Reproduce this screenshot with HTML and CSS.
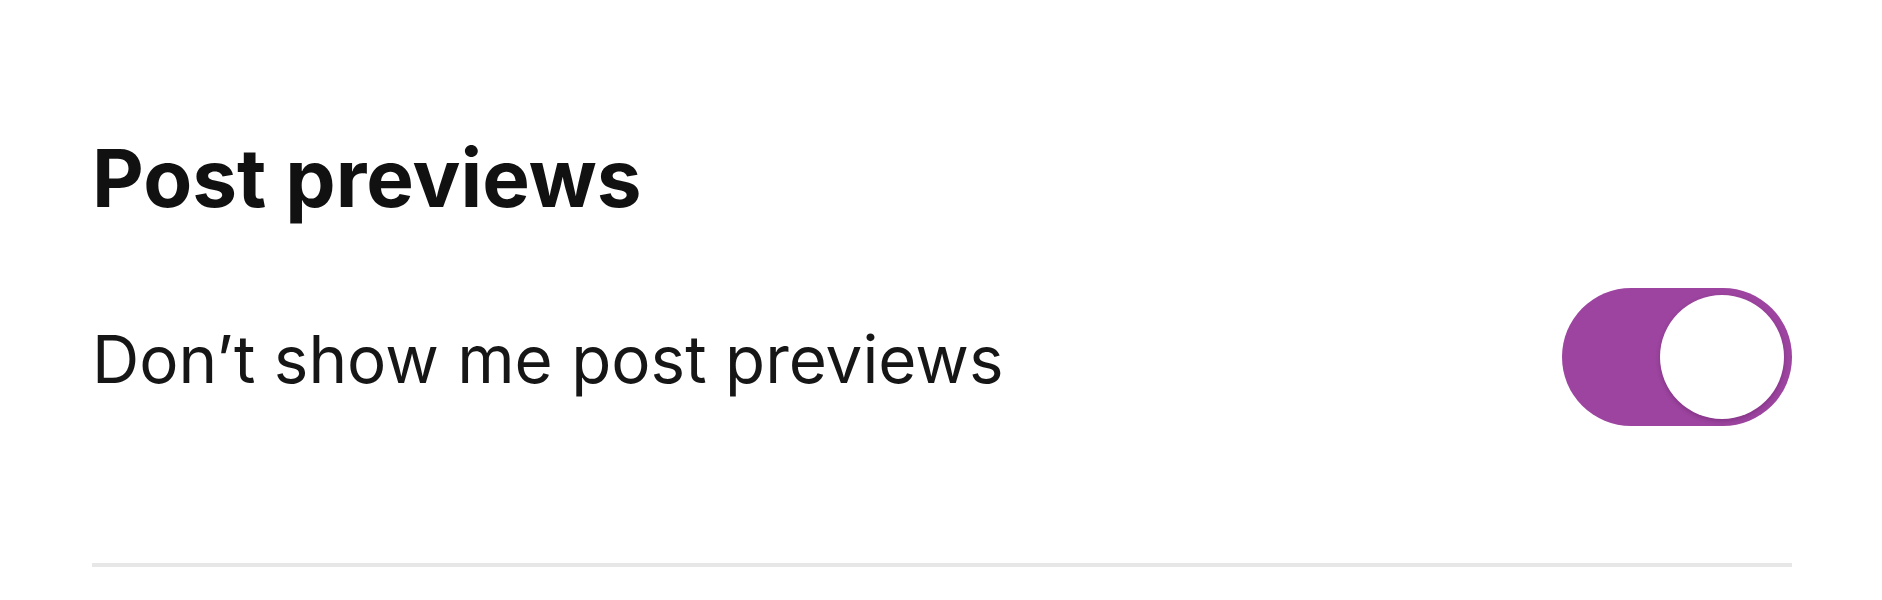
FILE: index.html
```html
<!DOCTYPE html>
<html lang="en">
<head>
<meta charset="utf-8">
<title>Post previews</title>
<link rel="stylesheet" href="styles.css">
</head>
<body>
<main class="settings">
  <section class="section">
    <h2 class="section-title">Post previews</h2>
    <div class="setting-row">
      <span class="setting-label">Don’t show me post previews</span>
      <span class="toggle is-on" role="switch" aria-checked="true"><span class="toggle-knob"></span></span>
    </div>
  </section>
  <hr class="divider">
</main>
</body>
</html>
```
FILE: styles.css
```css
html, body {
  margin: 0;
  padding: 0;
  background: #ffffff;
}
body {
  font-family: Inter, "Liberation Sans", sans-serif;
  color: #111111;
  width: 1882px;
  height: 600px;
  overflow: hidden;
}
.settings {
  padding: 138px 90px 0 92px;
}
.section {
  display: flex;
  flex-direction: column;
}
.section-title {
  margin: 0;
  font-size: 80px;
  line-height: 80px;
  font-weight: 700;
  color: #111111;
}
.setting-row {
  margin-top: 71px;
  height: 136px;
  display: flex;
  align-items: center;
  justify-content: space-between;
}
.setting-label {
  font-size: 65.5px;
  line-height: 66px;
  font-weight: 400;
  padding-top: 6px;
  color: #161616;
}
.toggle {
  width: 230px;
  height: 138px;
  border-radius: 69px;
  background: #9c449f;
  display: flex;
  align-items: center;
  justify-content: flex-end;
  padding: 0 8px;
  box-sizing: border-box;
}
.toggle-knob {
  width: 124px;
  height: 124px;
  border-radius: 50%;
  background: #ffffff;
  box-shadow: 0 2px 4px rgba(60, 0, 60, 0.25);
}
.divider {
  margin: 138px 0 0 0;
  border: 0;
  height: 4px;
  background: #e7e7e7;
}
```
